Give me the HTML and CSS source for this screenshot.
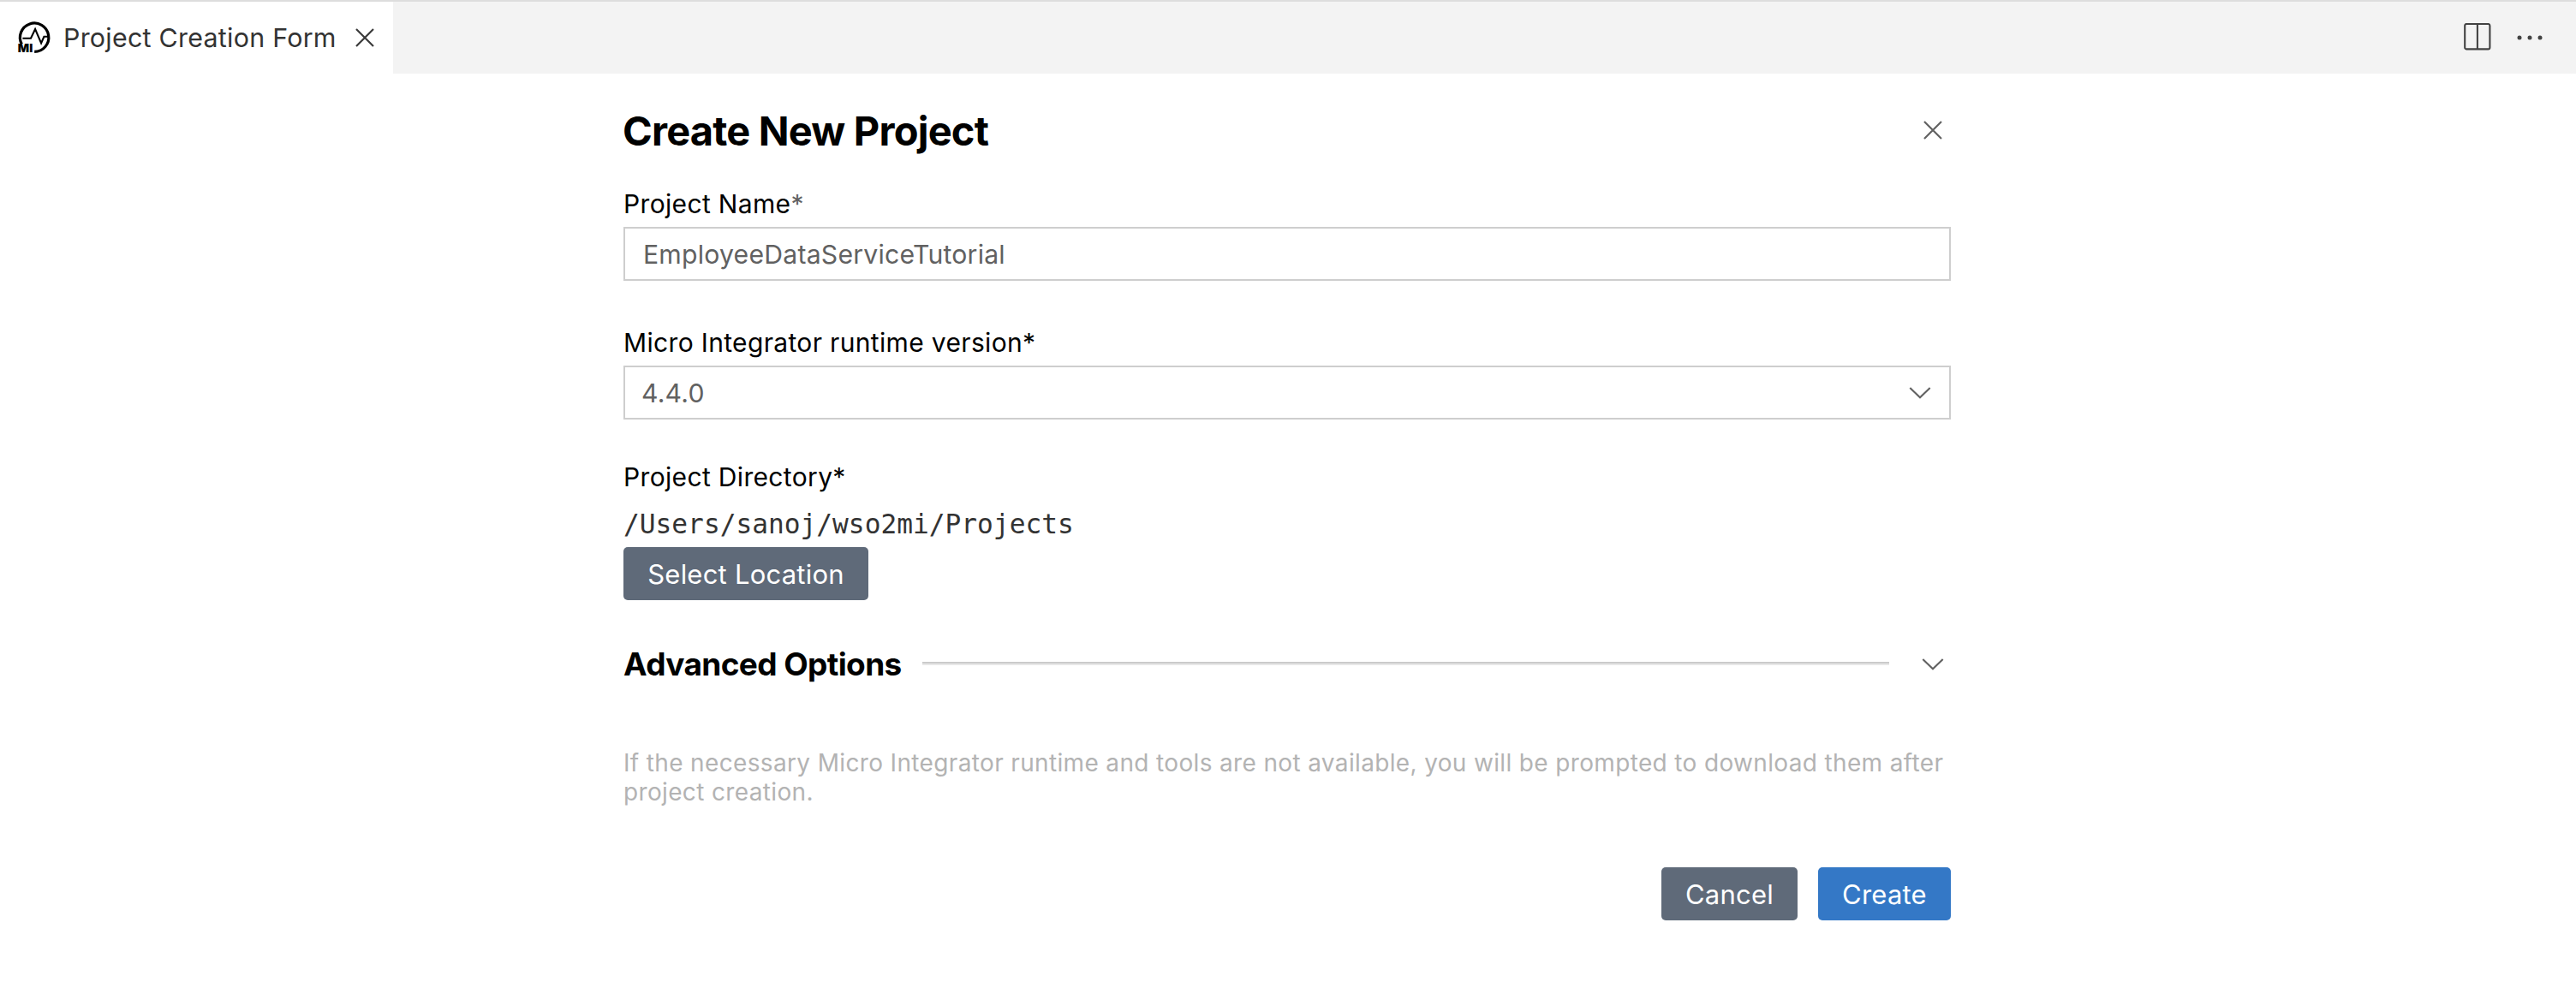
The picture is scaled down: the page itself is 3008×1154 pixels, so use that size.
FILE: index.html
```
<!DOCTYPE html>
<html lang="en">
<head>
<meta charset="utf-8">
<title>Project Creation Form</title>
<link rel="stylesheet" href="styles.css">
</head>
<body>
<header class="tab-bar">
  <div class="tab">
    <svg class="tab-logo" viewBox="0 0 40 40" aria-hidden="true">
      <path d="M3.4 27.6A16.7 16.7 0 1 1 18.2 36.4" fill="none" stroke="#000" stroke-width="3.2"/>
      <path d="M4.4 20.8H14L19.1 10L26.1 26.4L29.4 18.8H35.4" fill="none" stroke="#000" stroke-width="2.1"/>
      <text class="logo-text" x="-1.2" y="36.8" textLength="17.4" lengthAdjust="spacingAndGlyphs">MI</text>
    </svg>
    <span class="tab-title">Project Creation Form</span>
    <svg class="tab-close" viewBox="0 0 22 22" aria-hidden="true"><path d="M1 1L21 21M21 1L1 21"/></svg>
  </div>
  <div class="tab-actions">
    <svg class="split-icon" viewBox="0 0 32 32" aria-hidden="true"><rect x="1.2" y="1" width="29.2" height="29.4" rx="2"/><path d="M15.9 1V30.4"/></svg>
    <svg class="more-icon" viewBox="0 0 30 6" aria-hidden="true"><circle cx="3" cy="3" r="2.5"/><circle cx="15" cy="3" r="2.5"/><circle cx="27" cy="3" r="2.5"/></svg>
  </div>
</header>
<main class="form">
  <div class="form-header">
    <h1 class="form-title">Create New Project</h1>
    <svg class="form-close" viewBox="0 0 22 22" aria-hidden="true"><path d="M1 1L21 21M21 1L1 21"/></svg>
  </div>
  <div class="field name-field">
    <label class="label" for="name">Project Name<span class="required">*</span></label>
    <div class="control"><span class="value" id="name">EmployeeDataServiceTutorial</span></div>
  </div>
  <div class="field version-field">
    <label class="label" for="version">Micro Integrator runtime version*</label>
    <div class="control select"><span class="value version" id="version">4.4.0</span>
      <svg class="chevron" viewBox="0 0 26 14" aria-hidden="true"><path d="M1.3 1L13 12.3L24.7 1"/></svg>
    </div>
  </div>
  <div class="field directory-field">
    <span class="label">Project Directory*</span>
    <span class="path">/Users/sanoj/wso2mi/Projects</span>
    <button class="button secondary select-location">Select Location</button>
  </div>
  <div class="advanced">
    <h2 class="advanced-title">Advanced Options</h2>
    <div class="divider"></div>
    <svg class="chevron" viewBox="0 0 26 14" aria-hidden="true"><path d="M1.3 1L13 12.3L24.7 1"/></svg>
  </div>
  <p class="note">If the necessary Micro Integrator runtime and tools are not available, you will be prompted to download them after project creation.</p>
  <div class="buttons">
    <button class="button secondary cancel">Cancel</button>
    <button class="button primary create">Create</button>
  </div>
</main>
</body>
</html>
```
FILE: styles.css
```
* { box-sizing: border-box; }

body {
  margin: 0;
  background: #fff;
  color: #000;
  font-family: Inter, "Liberation Sans", sans-serif;
}

svg { display: block; flex: none; }

.tab-bar {
  display: flex;
  justify-content: space-between;
  height: 86px;
  border-top: 2px solid #ddd;
  background: #f3f3f3;
}

.tab {
  display: flex;
  align-items: center;
  width: 459px;
  padding-left: 22px;
  background: #fff;
}

.tab-logo { width: 40px; height: 40px; overflow: visible; }
.logo-text { font: 900 12.8px Inter, sans-serif; fill: #000; }

.tab-title {
  width: 337px;
  margin-left: 12px;
  color: #333;
  font-size: 30.4px;
  letter-spacing: 0.26px;
  white-space: nowrap;
}

.tab-close, .form-close {
  width: 22px;
  height: 22px;
  fill: none;
  stroke-width: 2.2;
}
.tab-close { margin-left: 4px; stroke: #3b3b3b; }

.tab-actions {
  display: flex;
  align-items: center;
  gap: 30px;
  padding-right: 39px;
}
.split-icon { width: 32px; height: 32px; margin-top: -2px; fill: none; stroke: #424242; stroke-width: 2.1; }
.more-icon { width: 30px; height: 6px; fill: #424242; }

.form { width: 1550px; margin-left: 728px; padding-top: 32px; }

.form-header {
  display: flex;
  align-items: center;
  justify-content: space-between;
  height: 70px;
  padding-right: 10px;
}
.form-title { margin: 0 0 2px -1px; font-size: 47px; font-weight: 700; letter-spacing: -0.8px; }
.form-close { margin-top: -2px; stroke: #616161; }

.field { display: flex; flex-direction: column; align-items: flex-start; }
.name-field { margin-top: 32px; }
.version-field { margin-top: 54px; }
.directory-field { margin-top: 49px; }

.label {
  height: 36px;
  font-size: 30px;
  line-height: 36px;
  letter-spacing: 0.34px;
}
.required { color: #616161; }

.control {
  display: flex;
  align-items: center;
  justify-content: space-between;
  width: 100%;
  height: 63px;
  margin-top: 9px;
  padding: 0 21px;
  border: 2px solid #cecece;
  color: #616161;
}
.value { font-size: 30.2px; letter-spacing: 0.22px; }
.version { margin-left: -2px; }
.chevron { width: 26px; height: 14px; fill: none; stroke: #616161; stroke-width: 2.1; }

.path {
  height: 36px;
  margin-top: 19px;
  color: #333;
  font: 31.2px/36px "DejaVu Sans Mono", monospace;
}

.button {
  height: 62px;
  padding: 0;
  border: 0;
  border-radius: 5px;
  color: #fff;
  font-family: inherit;
  font-size: 31px;
  letter-spacing: 0.22px;
}
.secondary { background: #5f6a79; }
.primary { background: #3478c6; }
.select-location { width: 286px; margin-top: 9px; }
.cancel { width: 159px; }
.create { width: 155px; }

.advanced {
  display: flex;
  align-items: center;
  height: 50px;
  margin-top: 50px;
}
.advanced-title {
  width: 349px;
  margin: 0 0 2px;
  font-size: 37px;
  font-weight: 700;
  letter-spacing: -0.62px;
  white-space: nowrap;
}
.divider {
  width: 1129px;
  height: 4px;
  margin: 0 38px 2px 0;
  border-top: 2px solid #cbcbcb;
  border-bottom: 2px solid #e8e8e8;
}

.note {
  margin: 73px 0 0;
  color: #b3b3b3;
  font-size: 28px;
  line-height: 34px;
  letter-spacing: 0.35px;
}

.buttons {
  display: flex;
  justify-content: flex-end;
  gap: 24px;
  margin-top: 71px;
}
```
